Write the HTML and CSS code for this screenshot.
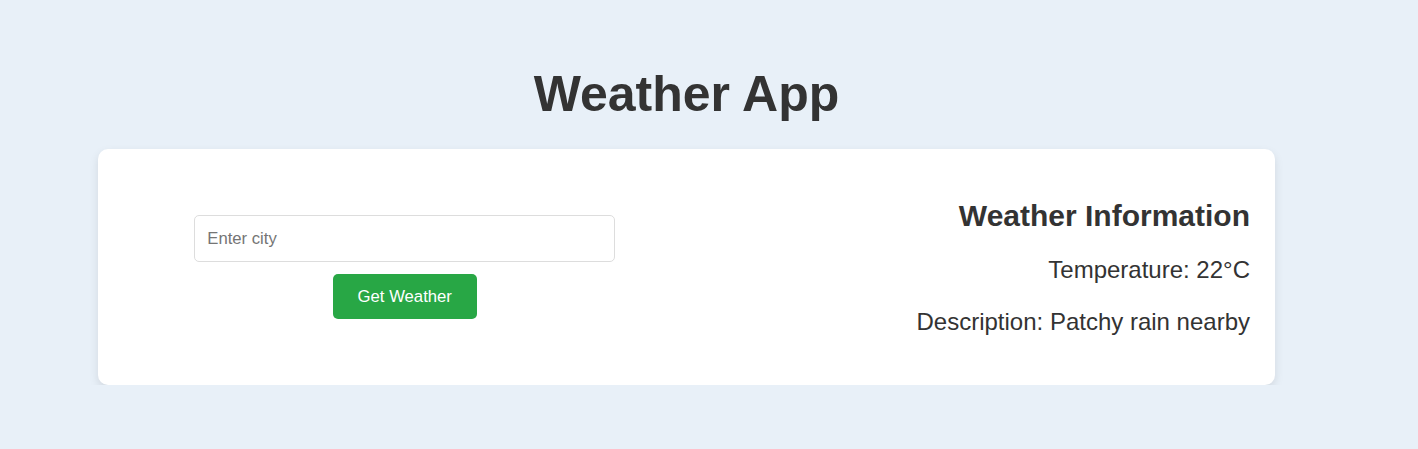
FILE: index.html
```html
<!DOCTYPE html>
<html lang="en">
<head>
<meta charset="UTF-8">
<title>Weather App</title>
<link rel="stylesheet" href="styles.css">
</head>
<body>
<div class="page">
  <h1 class="title">Weather App</h1>
  <div class="card">
    <div class="search">
      <input class="city-input" type="text" placeholder="Enter city">
      <button class="get-btn" type="button">Get Weather</button>
    </div>
    <div class="info">
      <h2 class="info-title">Weather Information</h2>
      <p class="info-line">Temperature: 22°C</p>
      <p class="info-line">Description: Patchy rain nearby</p>
    </div>
  </div>
</div>
</body>
</html>
```
FILE: styles.css
```css
html, body {
  margin: 0;
  padding: 0;
}
body {
  background: #e8f0f8;
  font-family: "Liberation Sans", Arial, sans-serif;
  color: #333;
}
.page {
  width: 1177px;
  margin-left: 98px;
  padding-top: 64px;
}
.title {
  margin: 0 0 25px;
  text-align: center;
  font-size: 50px;
  line-height: 60px;
  font-weight: bold;
  color: #333;
}
.card {
  background: #fff;
  border-radius: 10px;
  box-shadow: 0 4px 10px rgba(0, 0, 0, 0.1);
  padding: 25px;
  display: grid;
  grid-template-columns: 1fr 1fr;
  align-items: center;
  height: 186px;
}
.search {
  display: flex;
  flex-direction: column;
  align-items: center;
  gap: 12px;
}
.city-input {
  box-sizing: border-box;
  width: 421px;
  height: 47px;
  padding: 0 12px;
  border: 1px solid #ddd;
  border-radius: 5px;
  font-family: "Liberation Sans", Arial, sans-serif;
  font-size: 16.7px;
  color: #333;
  outline: none;
}
.city-input::placeholder {
  color: #757575;
}
.get-btn {
  width: 144px;
  height: 45px;
  background: #28a745;
  color: #fff;
  border: none;
  border-radius: 5px;
  font-family: "Liberation Sans", Arial, sans-serif;
  font-size: 16.7px;
  cursor: pointer;
}
.info {
  text-align: right;
}
.info-title {
  margin: 0 0 23px;
  font-size: 30px;
  line-height: 34px;
  font-weight: bold;
}
.info-line {
  margin: 0 0 24px;
  font-size: 24px;
  line-height: 28px;
}
.info-line:last-child {
  margin-bottom: 0;
}
```
